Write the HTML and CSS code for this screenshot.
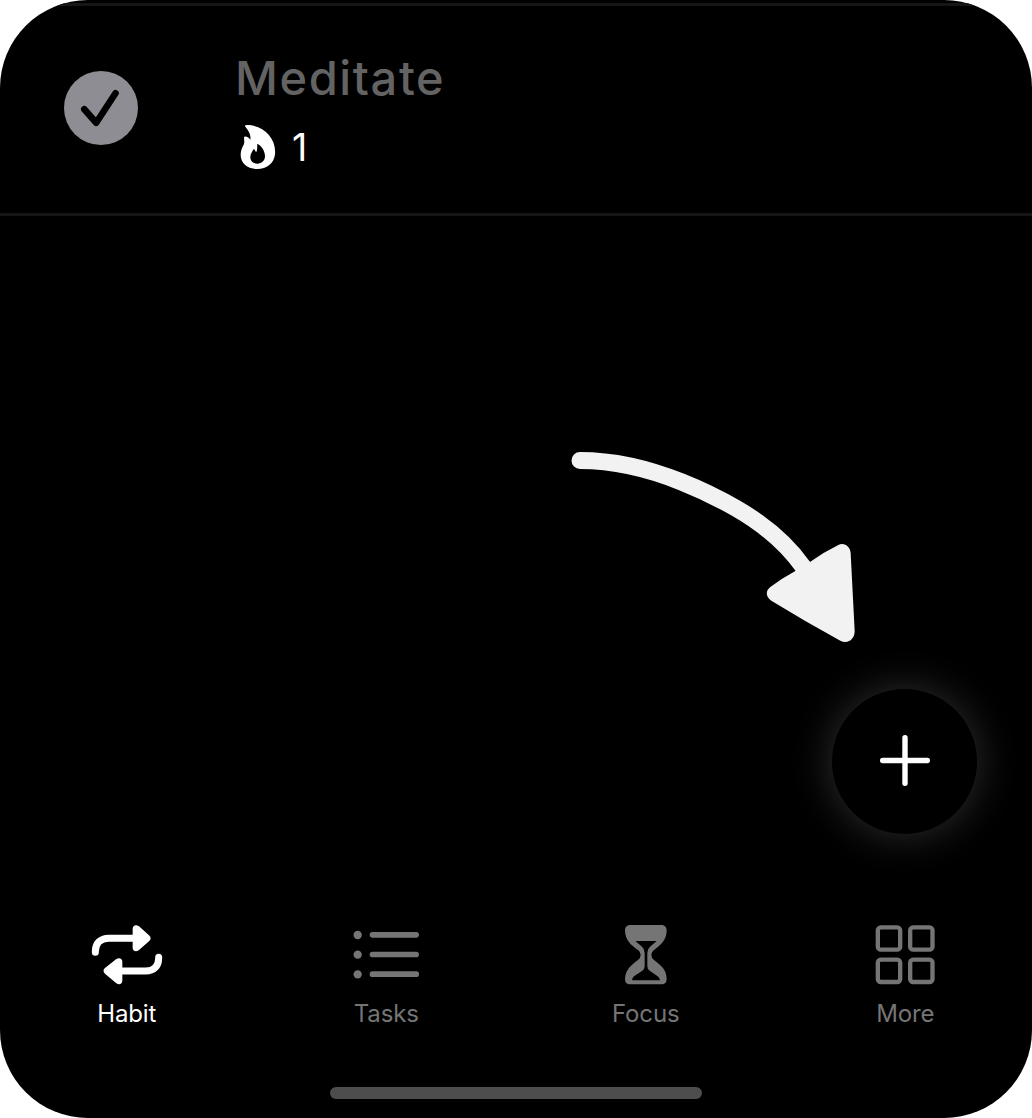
FILE: index.html
```html
<!DOCTYPE html>
<html lang="en">
<head>
<meta charset="utf-8">
<title>Habits</title>
<link rel="stylesheet" href="styles.css">
</head>
<body>
<div class="screen">
  <main class="habits">
    <article class="habit">
      <svg class="check" viewBox="0 0 74 74">
        <circle cx="37" cy="37" r="37" fill="#8e8d93"/>
        <path d="M20.3 38.3L32.2 51.8L51.5 22.3" fill="none" stroke="#000" stroke-width="6.6" stroke-linecap="round" stroke-linejoin="round"/>
      </svg>
      <div class="habit-body">
        <h1 class="habit-name">Meditate</h1>
        <div class="streak">
          <svg class="flame" viewBox="60 250 108 138">
            <path fill="#fff" fill-rule="evenodd" d="M77 253C103 252 130 263 146 282C161 299 167 320 165 341C162 369 140 385 112 385C83 385 62 368 62 343C62 330 66 321 72 310C74 304 72 296 72 289C76 285 85 289 91 297C94 282 83 267 75 257ZM112 309C111 319 113 326 109 334C106 332 104 328 102 324C97 331 91 340 91 349C91 361 100 369 112 369C125 369 135 360 135 346C135 332 126 316 112 309Z"/>
          </svg>
          <span class="streak-count">1</span>
        </div>
      </div>
    </article>
  </main>

  <svg class="hint-arrow" viewBox="0 0 960 690">
    <path d="M90 91.500C190 91.500 293 115 395 156C453 179 508 206 560 236C650 288 713 345 759 410L790 460" fill="none" stroke="#f2f2f2" stroke-width="51" stroke-linecap="round"/>
    <path fill="#f2f2f2" d="M781 395Q820 367 865 345C883 336 901 350 902 370L914 603C914 628 894 643 871 632Q765 574 664 512C646 500 647 481 661 471Q697 444 736 423Z"/>
  </svg>

  <button class="add" aria-label="Add habit">
    <svg class="plus" viewBox="0 0 50 51"><path d="M2.7 25.5H47.3M25 2.7V48.3" stroke="#fff" stroke-width="5.4" stroke-linecap="round"/></svg>
  </button>

  <nav class="tabs">
    <a class="tab active">
      <svg class="tab-icon" viewBox="0 0 240 180">
        <path d="M25 82V80C25 55 40 39.500 65 39.500H148M215 97V99C215 124 201 138 176 138H98" fill="none" stroke="currentColor" stroke-width="21" stroke-linecap="round"/>
        <path fill="currentColor" d="M137 11C137 1 147 -3 156 4L186 31Q196 40 186 49L156 75C147 82 137 78 137 69ZM106 110C106 100 96 96 87 103L54 129Q45 137 54 146L87 174C96 181 106 177 106 167Z"/>
      </svg>
      <span class="tab-label">Habit</span>
    </a>
    <a class="tab">
      <svg class="tab-icon" viewBox="18 0 240 180" fill="currentColor">
        <circle cx="53" cy="30" r="12.5"/><circle cx="53" cy="89" r="12.5"/><circle cx="53" cy="148" r="12.5"/>
        <rect x="89" y="21" width="148" height="17" rx="8.5"/><rect x="89" y="80" width="148" height="17" rx="8.5"/><rect x="89" y="139" width="148" height="17" rx="8.5"/>
      </svg>
      <span class="tab-label">Tasks</span>
    </a>
    <a class="tab">
      <svg class="tab-icon" viewBox="18 0 240 180" fill="currentColor">
        <path fill-rule="evenodd" d="M91 0H184C195 0 200 7 200 17C199 48 180 60 162 75Q154 81 154 89Q154 98 162 105C183 121 200 134 200 162C200 172 195 178 184 178H91C80 178 75 172 75 162C76 134 94 120 114 105Q122 98 122 89Q122 81 114 75C94 60 76 47 75 17C75 7 80 0 91 0ZM106 48L126 65Q134 72 134 83V124Q134 132 127 137L102 154Q97 158 96 166H180Q179 158 173 154L149 137Q142 132 142 124V83Q142 72 150 65L170 48Z"/>
      </svg>
      <span class="tab-label">Focus</span>
    </a>
    <a class="tab">
      <svg class="tab-icon" viewBox="16 0 240 180" fill="none" stroke="currentColor" stroke-width="13">
        <rect x="54.5" y="7" width="67" height="67" rx="9"/><rect x="151.5" y="7" width="67" height="67" rx="9"/>
        <rect x="54.5" y="104" width="67" height="67" rx="9"/><rect x="151.5" y="104" width="67" height="67" rx="9"/>
      </svg>
      <span class="tab-label">More</span>
    </a>
  </nav>
  <div class="home-indicator"></div>
</div>
</body>
</html>
```
FILE: styles.css
```css
* { box-sizing: border-box; }
body { margin: 0; background: #fff; font-family: Inter, "Liberation Sans", sans-serif; }
.screen {
  position: relative;
  display: flex;
  flex-direction: column;
  width: 1032px;
  height: 1118px;
  padding-top: 3px;
  overflow: hidden;
  border-radius: 88px;
  background: #000;
}
.habits { flex: 1; }
.habit {
  display: flex;
  gap: 97px;
  height: 213px;
  padding: 0 64px;
  border-top: 3px solid #161616;
  border-bottom: 3px solid #161616;
}
.check { width: 74px; height: 74px; margin-top: 65.4px; }
.habit-body { padding-top: 44px; }
.habit-name {
  margin: 0;
  color: #636363;
  font-size: 47px;
  font-weight: 450;
  line-height: 56px;
  letter-spacing: 1.6px;
}
.streak { display: flex; align-items: center; gap: 16px; height: 46px; margin: 17.5px 0 0 5px; }
.flame { width: 36px; height: 46px; }
.streak-count { padding-top: 2px; color: #fff; font-size: 37.5px; font-weight: 400; line-height: 46px; }
.hint-arrow { position: absolute; left: 550px; top: 430px; width: 320px; height: 230px; }
.add {
  position: absolute;
  left: 832px;
  top: 689px;
  display: grid;
  place-items: center;
  width: 145px;
  height: 145px;
  padding: 0;
  border: 0;
  border-radius: 50%;
  background: #000;
  box-shadow: 0 0 42px rgba(255, 255, 255, 0.19);
}
.plus { width: 50px; height: 51px; margin-bottom: 2px; }
.tabs { display: grid; grid-template-columns: repeat(4, 1fr); margin: 0 -3px; }
.tab { display: flex; flex-direction: column; align-items: center; gap: 14px; color: #757575; }
.tab.active { color: #fff; }
.tab-icon { width: 80px; height: 60px; overflow: visible; }
.tab-label { font-size: 24px; line-height: 30px; letter-spacing: -0.15px; }
.home-indicator {
  width: 372px;
  height: 12px;
  margin: 58px auto 19px;
  border-radius: 6px;
  background: #4d4d4d;
}
```
